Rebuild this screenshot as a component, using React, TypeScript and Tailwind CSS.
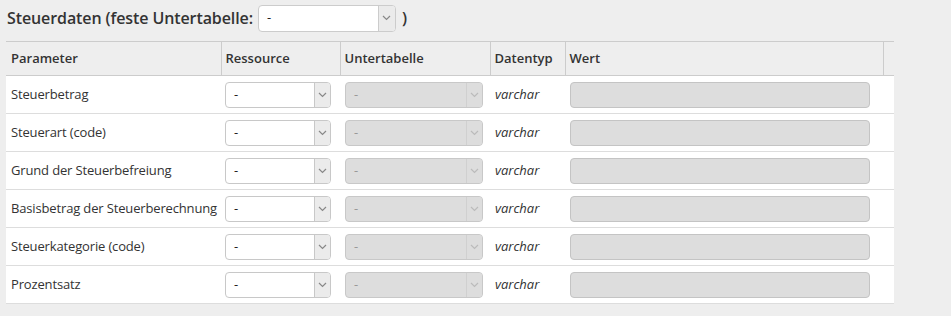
import React from "react";

const rows = [
  "Steuerbetrag",
  "Steuerart (code)",
  "Grund der Steuerbefreiung",
  "Basisbetrag der Steuerberechnung",
  "Steuerkategorie (code)",
  "Prozentsatz",
];

function Chevron({ color }: { color: string }) {
  return (
    <svg width="9" height="6" viewBox="0 0 9 6" fill="none">
      <path d="M1 1 L4.5 4.5 L8 1" stroke={color} strokeWidth="1.2" />
    </svg>
  );
}

function Select({ w, disabled }: { w: number; disabled?: boolean }) {
  return (
    <div
      className={
        "flex h-[26px] items-stretch rounded-[4px] border border-[#c8c8c8] overflow-hidden " +
        (disabled ? "bg-[#dddddd]" : "bg-white")
      }
      style={{ width: w }}
    >
      <div
        className={
          "flex flex-1 items-center pl-[8px] text-[13px] " +
          (disabled ? "text-[#999]" : "text-[#222]")
        }
      >
        -
      </div>
      <div
        className={
          "flex w-[16px] items-center justify-center border-l " +
          (disabled ? "border-[#d0d0d0] bg-[#dddddd]" : "border-[#c8c8c8] bg-[#ebebeb]")
        }
      >
        <Chevron color={disabled ? "#bbb" : "#888"} />
      </div>
    </div>
  );
}

export default function App() {
  return (
    <div
      className="min-h-[316px] w-[951px] bg-[#eeeeee] text-[#333]"
      style={{ fontFamily: '"Open Sans", "Noto Sans", sans-serif' }}
    >
      <div className="flex h-[35px] items-center pl-[7px] pt-[1px]">
        <span className="text-[16px] font-semibold text-[#333] tracking-[-0.1px]">
          Steuerdaten (feste Untertabelle:
        </span>
        <div className="ml-[5px] flex h-[27px] w-[138px] items-stretch rounded-[4px] border border-[#cccccc] bg-white overflow-hidden">
          <div className="flex flex-1 items-center pl-[8px] text-[13px] text-[#222]">-</div>
          <div className="flex w-[17px] items-center justify-center border-l border-[#cccccc] bg-[#ebebeb]">
            <Chevron color="#888" />
          </div>
        </div>
        <span className="ml-[6px] text-[16px] font-semibold">)</span>
      </div>
      <div className="mt-[6px] ml-[6px] w-[888px]">
        <table className="w-full table-fixed border-collapse text-[13px]">
          <thead>
            <tr className="h-[34px] bg-[#eeeeee] border-t border-b border-[#cccccc]">
              <th className="w-[215px] border-r border-[#cccccc] pl-[5px] text-left font-semibold">Parameter</th>
              <th className="w-[119px] border-r border-[#cccccc] pl-[4px] text-left font-semibold">Ressource</th>
              <th className="w-[150px] border-r border-[#cccccc] pl-[4px] text-left font-semibold">Untertabelle</th>
              <th className="w-[75px] border-r border-[#cccccc] pl-[4px] text-left font-semibold">Datentyp</th>
              <th className="w-[318px] border-r border-[#cccccc] pl-[4px] text-left font-semibold">Wert</th>
              <th className="w-[11px]"></th>
            </tr>
          </thead>
          <tbody>
            {rows.map((r) => (
              <tr key={r} className="h-[38px] bg-white border-b border-[#dddddd]">
                <td className="pl-[5px] whitespace-nowrap overflow-visible tracking-[-0.15px]">{r}</td>
                <td className="pl-[4px]">
                  <Select w={106} />
                </td>
                <td className="pl-[5px]">
                  <Select w={138} disabled />
                </td>
                <td className="pl-[5px] italic">varchar</td>
                <td className="pl-[5px]" colSpan={2}>
                  <div className="h-[26px] w-[300px] rounded-[4px] border border-[#c4c4c4] bg-[#dddddd]" />
                </td>
              </tr>
            ))}
          </tbody>
        </table>
      </div>
    </div>
  );
}
